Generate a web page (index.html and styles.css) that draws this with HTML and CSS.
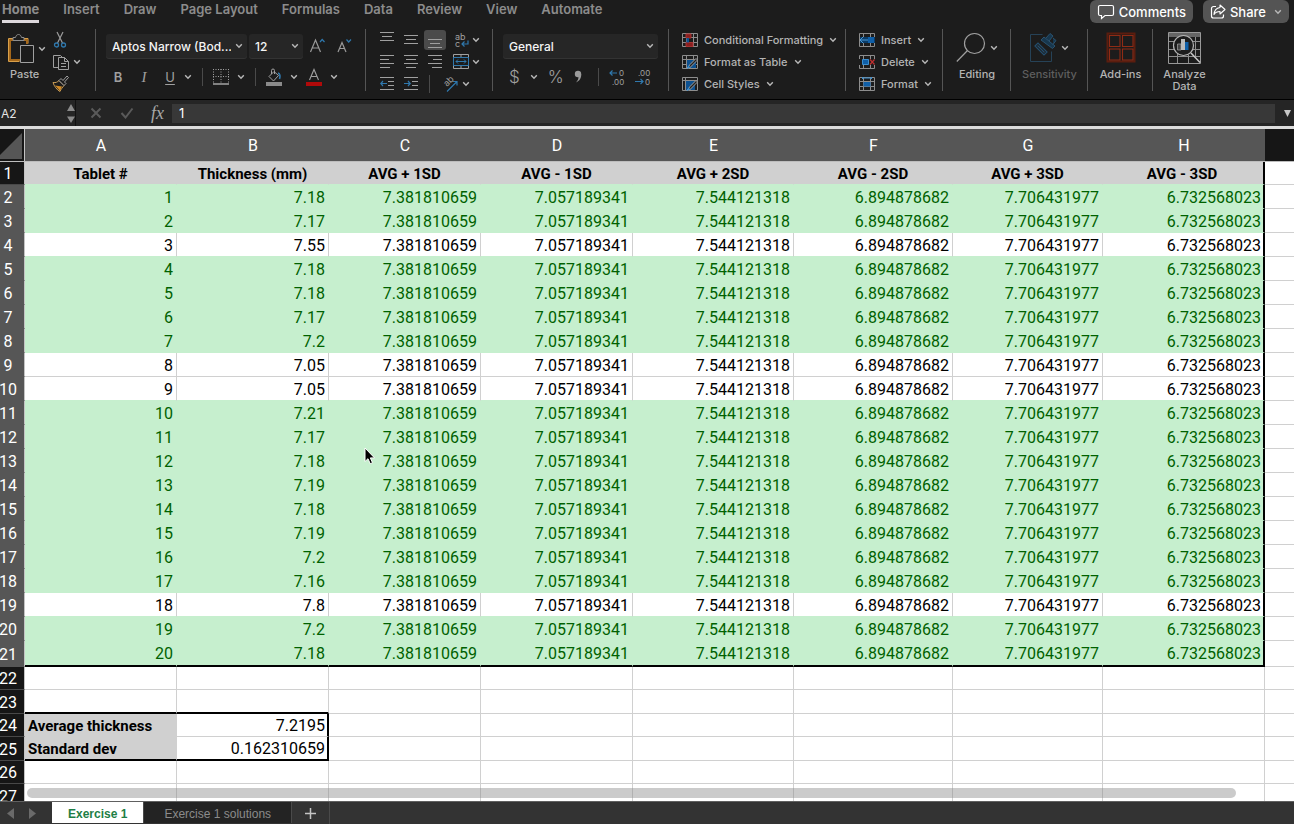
FILE: index.html
```html
<!DOCTYPE html>
<html lang="en">
<head>
<meta charset="utf-8">
<title>Exercise 1</title>
<link rel="stylesheet" href="styles.css">
</head>
<body>
<svg class="defs" aria-hidden="true">
  <symbol id="chev" viewBox="0 0 8 6"><path d="M1.2 1.2 4 4.2 6.800 1.200" fill="none" stroke="currentColor" stroke-width="1.4"/></symbol>
  <symbol id="mini-grid" viewBox="0 0 16 14"><path d="M.5.5h15v13H.5zM.5 4.500h15M.5 9.500h15M4.500.5v13M11.500.5v13" fill="none" stroke="#8d8d8d"/></symbol>
</svg>
<div class="app">
  <header class="top">
    <nav class="tabs">
      <a href="#" class="tab current">Home</a><a href="#" class="tab">Insert</a><a href="#" class="tab">Draw</a><a href="#" class="tab">Page Layout</a><a href="#" class="tab">Formulas</a><a href="#" class="tab">Data</a><a href="#" class="tab">Review</a><a href="#" class="tab">View</a><a href="#" class="tab">Automate</a>
    </nav>
    <div class="actions">
      <button class="pill"><svg width="18" height="16" viewBox="0 0 18 16"><path d="M3 1.500h12a1.500 1.500 0 0 1 1.500 1.500v7a1.500 1.500 0 0 1-1.500 1.500H8L4.500 14.500v-3H3A1.500 1.500 0 0 1 1.500 10V3A1.500 1.500 0 0 1 3 1.500z" fill="none" stroke="#fff" stroke-width="1.200"/></svg>Comments</button>
      <button class="pill share"><svg width="16" height="16" viewBox="0 0 16 16"><path d="M6 2.500H3.500a2 2 0 0 0-2 2v7.500a2 2 0 0 0 2 2h8a2 2 0 0 0 2-2v-1.500" fill="none" stroke="#fff" stroke-width="1.200"/><path d="M10 1l5 4.500-5 4.500V7.500C7.500 7.500 5.500 8 4 10.500 4.300 6.500 6.500 4 10 3.500z" fill="none" stroke="#fff" stroke-width="1.100" stroke-linejoin="round"/></svg>Share<svg class="chev wide"><use href="#chev"/></svg></button>
    </div>
  </header>

  <div class="ribbon">
    <div class="group clipboard">
      <button class="big paste">
        <span class="pic"><svg width="28" height="31" viewBox="0 0 28 31"><path d="M6.500 5.500h-5v23h11M16.500 5.500h4.500v5" fill="none" stroke="#d9a04a" stroke-width="1"/><path d="M7 7H3v20h10M16 7h4v4" fill="none" stroke="#a5681b" stroke-width="2"/><path d="M6 7.500v-3h2.500c.5-2 1.500-3 3-3s2.500 1 3 3H17v3z" fill="#1c1c1c" stroke="#8d8d8d"/><path d="M13.500 12.500h13v17h-13z" fill="#1c1c1c" stroke="#a0a0a0"/></svg><svg class="chev"><use href="#chev"/></svg></span>
        <span>Paste</span>
      </button>
      <div class="stack">
        <div class="line"><button aria-label="Cut"><svg width="16" height="18" viewBox="0 0 16 18"><path d="M5 1l5.500 11M11 1L5.500 12" stroke="#9a9a9a" fill="none" stroke-width="1.200"/><g fill="none" stroke="#2f78ad" stroke-width="1.300"><circle cx="4.500" cy="14" r="2"/><circle cx="11.500" cy="14" r="2"/></g></svg></button></div>
        <div class="line"><button aria-label="Copy"><svg width="18" height="18" viewBox="0 0 18 18"><g fill="none" stroke="#a0a0a0"><path d="M6.500 14.500h-5v-12h7l2 2"/><path d="M6.500 4.500h6l4 4v8h-10z" fill="#1c1c1c"/><path d="M12.500 4.500v4h4M9 10.500h5M9 13.500h5"/></g></svg></button><button aria-label="Copy options"><svg class="chev"><use href="#chev"/></svg></button></div>
        <div class="line"><button aria-label="Format painter"><svg width="18" height="18" viewBox="0 0 18 18"><path d="M1 7.500c3 .5 4.500-.5 6-2l5 5c-1.500 2-3 3.500-4 6C5 15 2 11 1 7.500z" fill="none" stroke="#c99c55"/><path d="M3 10.500l7 1-2 4.500z" fill="#d08a26"/><path d="M7 5.500l2-2 2 2 4-4.500 1.500 1.500-4 4.500 1.500 1.500-2 2z" fill="#1c1c1c" stroke="#a0a0a0"/></svg></button></div>
      </div>
    </div>

    <div class="group font">
      <div class="line tall">
        <label class="drop face"><select aria-label="Font"><option>Aptos Narrow (Bod...</option></select><svg class="chev"><use href="#chev"/></svg></label>
        <label class="drop size"><select aria-label="Font size"><option>12</option></select><svg class="chev"><use href="#chev"/></svg></label>
        <button class="grow" aria-label="Increase font size"><svg width="18" height="18" viewBox="0 0 18 18"><path d="M1.500 15L6.500 3 11.500 15M3.300 11h6.500" fill="none" stroke="#9a9a9a" stroke-width="1.200"/><path d="M11 5l2.200-2.500L15.500 5" fill="none" stroke="#2f78ad" stroke-width="1.200"/></svg></button>
        <button aria-label="Decrease font size"><svg width="18" height="18" viewBox="0 0 18 18"><path d="M2 15L6 5.500 10 15M3.500 11.500h5" fill="none" stroke="#9a9a9a" stroke-width="1.200"/><path d="M10.500 2.500L12.700 5 15 2.500" fill="none" stroke="#2f78ad" stroke-width="1.200"/></svg></button>
      </div>
      <div class="line marks">
        <button class="mark bold">B</button><button class="mark ital">I</button><button class="mark under">U</button>
        <button aria-label="Underline options"><svg class="chev"><use href="#chev"/></svg></button>
        <i class="rule"></i>
        <button aria-label="Borders"><svg width="16" height="16" viewBox="0 0 16 16"><path d="M.5 0v14M15.500 0v14M8 0v14M0 .5h16M0 7.500h16" fill="none" stroke="#a0a0a0" stroke-dasharray="1 1.500"/><path d="M0 15h16" stroke="#bbb" stroke-width="1.300"/></svg></button>
        <button aria-label="Border options"><svg class="chev"><use href="#chev"/></svg></button>
        <i class="rule"></i>
        <button aria-label="Fill colour"><svg width="16" height="18" viewBox="0 0 16 18"><path d="M3 8.500l5-5 4.500 4-5 5.500zM5.500 6V2.500a1.500 1.500 0 0 1 3 0V6" fill="none" stroke="#a0a0a0"/><path d="M12 5c2 .5 2.500 3 1.500 6" fill="none" stroke="#2f78ad" stroke-width="1.600"/><path d="M0 14h16v4H0z" fill="#8b8b8b"/></svg></button>
        <button aria-label="Fill options"><svg class="chev"><use href="#chev"/></svg></button>
        <button aria-label="Font colour"><svg width="16" height="18" viewBox="0 0 16 18"><path d="M3.500 12L8 1.500 12.500 12M5.200 8.500h5.600" fill="none" stroke="#a0a0a0" stroke-width="1.100"/><path d="M0 14h16v4H0z" fill="#b00a0a"/></svg></button>
        <button aria-label="Font colour options"><svg class="chev"><use href="#chev"/></svg></button>
      </div>
    </div>

    <div class="group align">
      <div class="line">
        <button aria-label="Top align"><svg width="14" height="16" viewBox="0 0 14 16"><path d="M0 .5h14M2 4.500h10M0 8.500h14" stroke="#a0a0a0"/></svg></button>
        <button aria-label="Middle align"><svg width="14" height="16" viewBox="0 0 14 16"><path d="M0 3.500h14M2 7.500h10M0 11.500h14" stroke="#a0a0a0"/></svg></button>
        <button class="on" aria-label="Bottom align"><svg width="14" height="16" viewBox="0 0 14 16"><path d="M0 7.500h14M2 11.500h10M0 15.500h14" stroke="#a0a0a0"/></svg></button>
        <button aria-label="Wrap text"><svg width="16" height="20" viewBox="0 0 16 20"><text x="2" y="10" class="glyph">ab</text><text x="2" y="17" class="glyph">c</text><path d="M15 10.500V14H9M11.500 11.500L9 14l2.500 2.500" fill="none" stroke="#2f78ad" stroke-width="1.200"/></svg></button>
        <button aria-label="Wrap options"><svg class="chev"><use href="#chev"/></svg></button>
      </div>
      <div class="line">
        <button aria-label="Left"><svg width="14" height="16" viewBox="0 0 14 16"><path d="M0 1.500h14M0 5.500h9M0 9.500h14M0 13.500h10" stroke="#a0a0a0"/></svg></button>
        <button aria-label="Centre"><svg width="14" height="16" viewBox="0 0 14 16"><path d="M0 1.500h14M2 5.500h10M0 9.500h14M2 13.500h10" stroke="#a0a0a0"/></svg></button>
        <button aria-label="Right"><svg width="14" height="16" viewBox="0 0 14 16"><path d="M0 1.500h14M5 5.500h9M0 9.500h14M4 13.500h10" stroke="#a0a0a0"/></svg></button>
        <button aria-label="Merge"><svg width="16" height="16" viewBox="0 0 16 16"><path d="M.5.5h15v14H.5zM8 .5v3M8 12v2.500" fill="none" stroke="#a0a0a0"/><path d="M.5 3.500h15v8H.5z" fill="#1c1c1c" stroke="#2f78ad"/><path d="M3 7.500h10M5 5.500l-2 2 2 2M11 5.500l2 2-2 2" fill="none" stroke="#2f78ad"/></svg></button>
        <button aria-label="Merge options"><svg class="chev"><use href="#chev"/></svg></button>
      </div>
      <div class="line">
        <button aria-label="Decrease indent"><svg width="14" height="16" viewBox="0 0 14 16"><path d="M0 1.500h14M8 5.500h6M8 9.500h6M0 13.500h14" stroke="#a0a0a0"/><path d="M.8 7.500H7M3 5L.8 7.500 3 10" fill="none" stroke="#2f78ad" stroke-width="1.200"/></svg></button>
        <button aria-label="Increase indent"><svg width="14" height="16" viewBox="0 0 14 16"><path d="M0 1.500h14M8 5.500h6M8 9.500h6M0 13.500h14" stroke="#a0a0a0"/><path d="M0 7.500h6M4 5l2.200 2.500L4 10" fill="none" stroke="#2f78ad" stroke-width="1.200"/></svg></button>
        <i class="rule"></i>
        <button aria-label="Orientation"><svg class="spill" width="18" height="18" viewBox="0 0 18 18"><text x="0" y="0" class="glyph" transform="translate(6 12) rotate(-45)">ab</text><path d="M6 16.500L16 6.500M12 6.500h4v4" fill="none" stroke="#2f78ad" stroke-width="1.200"/></svg></button>
        <button aria-label="Orientation options"><svg class="chev"><use href="#chev"/></svg></button>
      </div>
    </div>

    <div class="group number">
      <div class="line tall">
        <label class="drop fmt"><select aria-label="Number format"><option>General</option></select><svg class="chev"><use href="#chev"/></svg></label>
      </div>
      <div class="line nums">
        <button class="sym">$</button><button aria-label="Currency options"><svg class="chev"><use href="#chev"/></svg></button><button class="sym">%</button><button class="comma" aria-label="Comma style"><svg width="8" height="14" viewBox="0 0 8 14"><circle cx="4" cy="4" r="3.200" fill="#9a9a9a"/><path d="M7.200 4c.3 4-1.700 7-5.200 8.500 1.800-2 2.500-3.500 2.500-6z" fill="#9a9a9a"/></svg></button>
        <i class="rule"></i>
        <button aria-label="Increase decimal"><svg width="16" height="18" viewBox="0 0 16 18"><text x="10" y="8" class="dec">0</text><text x="3" y="17" class="dec">.00</text><path d="M1 5h7M3.500 2.500L1 5l2.500 2.500" fill="none" stroke="#2f78ad" stroke-width="1.200"/></svg></button>
        <button aria-label="Decrease decimal"><svg width="16" height="18" viewBox="0 0 16 18"><text x="3" y="8" class="dec">.00</text><text x="10" y="17" class="dec">0</text><path d="M0 13.500h8M5.500 11L8 13.500 5.500 16" fill="none" stroke="#2f78ad" stroke-width="1.200"/></svg></button>
      </div>
    </div>

    <div class="group styles">
      <button class="row"><svg width="16" height="14" viewBox="0 0 16 14"><use href="#mini-grid"/><path d="M4 1h5v4H4zM4 9.500h7v4H4z" fill="#8a1f1f" stroke="#a83232"/><path d="M4.500 5h2.500v4.500H4.500z" fill="#0d5191"/></svg>Conditional Formatting<svg class="chev"><use href="#chev"/></svg></button>
      <button class="row"><svg width="16" height="14" viewBox="0 0 16 14"><use href="#mini-grid"/><path d="M5 5h9v8H5z" fill="#0d5191"/><path d="M5 13.500l3-4 6-6 1.500 1.500-6 6-3 3z" fill="#222" stroke="#a0a0a0"/><path d="M4.500 14l2-3.500 2 2z" fill="#3b8fd0"/></svg>Format as Table<svg class="chev"><use href="#chev"/></svg></button>
      <button class="row"><svg width="16" height="14" viewBox="0 0 16 14"><path d="M.5.5h15v13H.5zM.5 3.500h15M3.500.5v13" fill="none" stroke="#8d8d8d"/><path d="M4 4h9v9H4z" fill="#0d5191"/><path d="M5 13.500l3-4 6-6 1.500 1.500-6 6-3 3z" fill="#222" stroke="#a0a0a0"/><path d="M4.500 14l2-3.500 2 2z" fill="#3b8fd0"/></svg>Cell Styles<svg class="chev"><use href="#chev"/></svg></button>
    </div>

    <div class="group cells">
      <button class="row"><svg width="16" height="14" viewBox="0 0 16 14"><use href="#mini-grid"/><path d="M1 4h15v6H1z" fill="#0a3c68"/><path d="M9 4h6v6H9z" fill="#0f5fa8"/><path d="M1 7h8M4 4L1 7l3 3" fill="none" stroke="#4c9ad8"/></svg>Insert<svg class="chev"><use href="#chev"/></svg></button>
      <button class="row"><svg width="16" height="14" viewBox="0 0 16 14"><use href="#mini-grid"/><path d="M0 4h16v6H0z" fill="#1c1c1c"/><path d="M3.500 4.500h6v5h-6z" fill="#0f5fa8" stroke="#3b8fd0"/><path d="M11 4.500l4.500 5M15.500 4.500l-4.500 5" stroke="#c03030" stroke-width="1.200"/></svg>Delete<svg class="chev"><use href="#chev"/></svg></button>
      <button class="row"><svg width="16" height="14" viewBox="0 0 16 14"><use href="#mini-grid"/><path d="M4.500 5h7v4.500h-7z" fill="#0f5fa8"/><path d="M3.500 0v2M12.500 0v2M3.500 1h9" stroke="#3b8fd0"/></svg>Format<svg class="chev"><use href="#chev"/></svg></button>
    </div>

    <div class="group solo editing">
      <button class="big"><span class="pic"><svg width="30" height="31" viewBox="0 0 30 31"><circle cx="18.500" cy="11.500" r="10" fill="none" stroke="#a0a0a0" stroke-width="1.200"/><path d="M11.500 18.500L.8 29.500" stroke="#a0a0a0" stroke-width="1.200"/></svg><svg class="chev"><use href="#chev"/></svg></span><span>Editing</span></button>
    </div>
    <div class="group solo sens">
      <button class="big dim"><span class="pic"><svg width="28" height="31" viewBox="0 0 28 31"><path d="M13.500 2.500H1.500v27h21v-10" fill="none" stroke="#264257"/><path d="M6 14l3-3 9 9-3 3zM8.500 13.500l7 7" fill="none" stroke="#244e6e" stroke-width="1.200"/><path d="M12 8l3-3 11 9-2.500 2.500zM17 6l4-4.500 3 2.500-4 5M24 6l3 2.500-3 4" fill="#17374e" stroke="#2a526f"/></svg><svg class="chev"><use href="#chev"/></svg></span><span>Sensitivity</span></button>
    </div>
    <div class="group solo addins">
      <button class="big"><span class="pic"><svg width="30" height="31" viewBox="0 0 30 31"><path d="M1.500 1.500h27v28h-27z" fill="none" stroke="#5c1d0e" stroke-width="2"/><path d="M3.500 3.500h10.500v11H3.500zM16.500 3.500H27v11H16.500zM3.500 17H14v11H3.500zM16.500 17H27v11H16.500z" fill="none" stroke="#8f2b15" stroke-width="1.100"/></svg></span><span>Add-ins</span></button>
    </div>
    <div class="group solo analyze">
      <button class="big"><span class="pic"><svg width="33" height="32" viewBox="0 0 33 32"><path d="M.5.5h32v31H.5z" fill="none" stroke="#999"/><path d="M1 1h31v4H1z" fill="#666"/><path d="M1 9.500h8M23 9.500h9M1 17.500h6M25 17.500h7M1 24.500h31M9.500 22v9M20.500 23v8M27.500 5v20" stroke="#8d8d8d"/><circle cx="15.500" cy="13.500" r="10" fill="#1c1c1c" stroke="#b5b5b5" stroke-width="1.200"/><path d="M23 21l9 9.500" stroke="#c8c8c8" stroke-width="1.500"/><path d="M9.500 12h3.500v6H9.500z" fill="#444" stroke="#999" stroke-width=".8"/><path d="M13 7h4v11h-4z" fill="#bbb"/><path d="M17 10h3.500v8H17z" fill="#0f5fa8"/></svg></span><span>Analyze<br>Data</span></button>
    </div>
  </div>

  <div class="formula">
    <input class="name" aria-label="Name box" value="A2">
    <span class="spin"><svg width="8" height="19" viewBox="0 0 8 19"><path d="M4 0l4 7H0zM4 19l4-6.500H0z" fill="#8a8a8a"/></svg></span>
    <div class="fxs">
      <button aria-label="Cancel"><svg width="12" height="12" viewBox="0 0 12 12"><path d="M1.500 1.500l9 9M10.500 1.500l-9 9" stroke="#5a5a5a" stroke-width="2"/></svg></button>
      <button aria-label="Enter"><svg width="14" height="12" viewBox="0 0 14 12"><path d="M1.500 6l4 4.500 7-9" fill="none" stroke="#5a5a5a" stroke-width="2"/></svg></button>
      <button class="fx">fx</button>
    </div>
    <input class="entry" aria-label="Formula" value="1">
    <button class="expand" aria-label="Expand formula bar"><svg width="7" height="7" viewBox="0 0 7 7"><path d="M0 0h7L3.500 7z" fill="#c8c8c8"/></svg></button>
  </div>

  <main class="sheet">
    <table>
      <colgroup><col class="c-num"><col class="c-std"><col class="c-std"><col class="c-std"><col class="c-std"><col class="c-e"><col class="c-f"><col class="c-g"><col class="c-h"><col></colgroup>
      <thead><tr><th class="corner"><svg width="22" height="26" viewBox="0 0 22 26"><path d="M22 0v26H0V22z" fill="#565656"/></svg></th><th>A</th><th>B</th><th>C</th><th>D</th><th>E</th><th>F</th><th>G</th><th>H</th><th class="off"></th></tr></thead>
      <tbody id="rows"></tbody>
    </table>
    <div class="scroll"></div>
    <svg class="pointer" width="12" height="18" viewBox="0 0 12 18"><path d="M1 1v13.500l3-2.800 2.200 5 2.300-1-2.200-4.800h4.200z" fill="#000" stroke="#fff"/></svg>
  </main>

  <footer class="sheets">
    <button class="arrow" aria-label="Previous sheet"><svg width="7" height="11" viewBox="0 0 7 11"><path d="M7 0v11L0 5.500z" fill="#6a6a6a"/></svg></button>
    <button class="arrow" aria-label="Next sheet"><svg width="7" height="11" viewBox="0 0 7 11"><path d="M0 0v11l7-5.500z" fill="#6a6a6a"/></svg></button>
    <button class="leaf active">Exercise 1</button>
    <button class="leaf">Exercise 1 solutions</button>
    <button class="plus" aria-label="Add sheet"><svg width="11" height="11" viewBox="0 0 11 11"><path d="M5.500 0v11M0 5.500h11" stroke="#c4c4c4" stroke-width="1.500"/></svg></button>
  </footer>
</div>
<script src="script.js"></script>
</body>
</html>
```
FILE: styles.css
```css
* { box-sizing: border-box; }
body { margin: 0; background: #1c1c1c; font-family: Inter, "Liberation Sans", sans-serif; }
button, input, select { font: inherit; color: inherit; background: none; border: 0; padding: 0; margin: 0; border-radius: 0; outline: 0; }
button { display: inline-flex; align-items: center; justify-content: center; flex: none; }
svg { display: block; flex: none; }
.spill { overflow: visible; }
.defs { position: absolute; width: 0; height: 0; }
.app { display: flex; flex-direction: column; height: 100vh; overflow: hidden; }
.chev { width: 8px; height: 6px; color: #b8b8b8; }

.top { display: flex; justify-content: space-between; height: 29px; padding: 0 5px 0 2px; }
.tabs { display: flex; gap: 24px; }
.tab { height: 23px; line-height: 19px; font-size: 13px; font-weight: 600; color: #8c8c8c; text-decoration: none; }
.tab.current { font-weight: 700; border-bottom: 3px solid #ddd8dc; }
.actions { display: flex; gap: 10px; }
.pill { height: 23px; padding: 0 7px; gap: 4px; border-radius: 6px; background: #545454; color: #fff; font-size: 13px; font-weight: 500; }
.pill .wide { margin-left: 4px; }

.ribbon { display: flex; height: 71px; border-bottom: 1px solid #000; color: #b4b4b4; font-size: 11px; font-weight: 500; }
.group { position: relative; flex: none; display: flex; flex-direction: column; }
.group::after { content: ""; position: absolute; right: 0; top: 0; width: 1px; height: 62px; background: #555; }
.group.analyze::after { display: none; }
.line { display: flex; align-items: center; height: 22px; }
.big { flex-direction: column; justify-content: flex-start; line-height: 12px; }
.pic { display: flex; align-items: center; gap: 4px; height: 35px; margin-bottom: 3px; }

.clipboard { width: 96px; flex-direction: row; gap: 6px; padding-left: 7px; }
.paste { align-items: flex-start; padding-top: 2px; }
.paste .pic { margin-bottom: 2px; gap: 3px; }
.paste > span:last-child { padding-left: 3px; }
.stack .line { gap: 3px; }

.font { width: 270px; padding: 4px 0 0 10px; }
.tall { height: 26px; gap: 2px; }
.drop { position: relative; display: flex; height: 24px; border-radius: 3px; background: #262626; box-shadow: 0 1px 0 #333; color: #f4f4f4; font-size: 12px; }
.drop select { appearance: none; width: 100%; padding: 0 16px 0 6px; }
.drop .chev { position: absolute; right: 4px; top: 9px; pointer-events: none; }
.face { width: 141px; }
.size { width: 54px; }
.grow { margin: 0 7px 0 4px; }
.marks { height: 38px; gap: 8px; padding: 0 0 2px 6px; }
.mark { width: 12px; margin-right: 6px; font-size: 13px; font-weight: 400; color: #a0a0a0; }
.bold { font-weight: 600; }
.ital { font-family: "Liberation Serif", serif; font-size: 15px; font-style: italic; }
.under { margin-right: 0; text-decoration: underline; text-underline-offset: 2px; }
.rule { flex: none; width: 1px; height: 18px; background: #4a4a4a; }
.marks .rule { margin: 0 2px; }

.align { width: 127px; padding: 0 0 0 14px; }
.align .line { gap: 10px; }
.align .on { width: 22px; height: 20px; margin: 0 -4px; border-radius: 3px; background: #4b4b4b; }
.align .line button:nth-child(4) { margin-left: 1px; }
.align .line button:last-child { margin-left: -7px; }
.align .line .rule { margin: 0 0 0 1px; }
.glyph { font: 400 9px Inter, sans-serif; fill: #a0a0a0; }
.dec { font: 400 8px Inter, sans-serif; fill: #a0a0a0; }

.number { width: 176px; padding: 4px 0 0 10px; }
.fmt { width: 155px; }
.nums { height: 38px; gap: 10px; padding: 0 0 2px 6px; }
.sym { min-width: 10px; font-size: 17px; font-weight: 300; color: #a0a0a0; }
.nums .rule { margin: 0 0 0 6px; }

.row { height: 22px; gap: 6px; justify-content: flex-start; }
.styles { width: 177px; padding-left: 13px; }
.cells { width: 97px; padding-left: 13px; }
.solo { padding-top: 1px; align-items: center; }
.editing { width: 68px; }
.sens { width: 77px; }
.addins { width: 65px; }
.analyze { width: 63px; }
.dim { color: #5f5f5f; }

.formula { display: flex; align-items: center; height: 29px; flex: none; background: #252525; border-bottom: 3px solid #dcdcdc; color: #e4e4e4; }
.name { width: 67px; padding-left: 1px; font-size: 12px; }
.spin { display: flex; align-items: center; width: 9px; height: 100%; border-right: 1px solid #111; }
.fxs { display: flex; align-items: center; justify-content: space-between; width: 96px; padding: 0 8px 0 14px; }
.fx { font: italic 18px "Liberation Serif", serif; color: #a8a8a8; }
.entry { flex: 1; height: 19px; padding-left: 7px; background: #383838; font-size: 13px; color: #fff; }
.expand { width: 19px; padding-left: 5px; }

.sheet { position: relative; flex: 1; min-height: 0; overflow: hidden; background: #fff; }
table { width: 100%; table-layout: fixed; border-collapse: separate; border-spacing: 0; font: 400 16px Roboto, sans-serif; color: #000; }
.c-num { width: 25px; }
.c-std { width: 152px; }
.c-e { width: 161px; }
.c-f { width: 159px; }
.c-g { width: 150px; }
.c-h { width: 162px; }
th, td { padding: 2px 0 0; font-weight: 400; line-height: 20px; white-space: nowrap; }
thead th { height: 33px; background: #565656; color: #fff; border-bottom: 1px solid #bdbdbd; }
thead .corner { padding: 0; background: #161616; border-right: 1px solid #c4c4c4; vertical-align: bottom; }
.corner svg { margin: 0 0 2px; }
thead .off { background: #161616; }
td { height: 24px; padding-right: 3px; text-align: right; border-right: 1px solid #d0d0d0; border-bottom: 1px solid #d0d0d0; }
.off { border-right: 0; }
.num { padding-right: 8px; text-align: center; background: #161616; color: #fff; border-right: 1px solid #c4c4c4; border-bottom: 1px solid #484848; }
.num span { display: flex; justify-content: center; }
.sel .num { background: #565656; border-bottom-color: #565656; }
.short td { height: 23px; }
.titles td { padding-right: 0; text-align: center; font-size: 15px; font-weight: 700; background: #d0d0d0; border-color: #d0d0d0; }
.green td { color: #006100; background: #c6efce; border-color: #c6efce; }
.above td { border-bottom-color: #c6efce; }
tr td.edge { border-right: 2px solid #000; padding-right: 2px; }
tr td.off { background: #fff; border-right: 0; border-bottom-color: #d0d0d0; }
.last td { height: 26px; border-bottom: 2px solid #000; }
.last td.off { border-bottom: 1px solid #d0d0d0; }
td.under-line { border-bottom: 2px solid #000; }
td.box { border-right: 2px solid #000; padding-right: 2px; }
td.label { padding-left: 3px; text-align: left; font-size: 15px; font-weight: 700; background: #d0d0d0; border-right-color: #d0d0d0; }
td.joined { border-bottom-color: #d0d0d0; }
.scroll { position: absolute; left: 27px; right: 58px; bottom: 3px; height: 10px; border-radius: 5px; background: rgba(140, 140, 140, .45); }
.pointer { position: absolute; left: 364px; top: 318px; }

.sheets { flex: none; display: flex; height: 23px; background: #333; border-top: 1px solid #606060; font: 400 12px "Liberation Sans", sans-serif; color: #8b8b8b; }
.arrow { width: 20px; }
.arrow + .arrow { width: 24px; margin-right: 8px; }
.leaf { height: 21px; padding: 2px 20px 0; background: #232323; border-right: 1px solid #4a4a4a; font-size: 13px; }
.leaf { font-size: 12px; }
.leaf.active { padding: 2px 16px 0; background: #fff; color: #1e7e45; font-weight: 700; }
.plus { width: 38px; border-right: 1px solid #4a4a4a; }
```
FILE: script.js
```js
const thickness = ["7.18", "7.17", "7.55", "7.18", "7.18", "7.17", "7.2", "7.05", "7.05", "7.21",
  "7.17", "7.18", "7.19", "7.18", "7.19", "7.2", "7.16", "7.8", "7.2", "7.18"];
const limits = ["7.381810659", "7.057189341", "7.544121318", "6.894878682", "7.706431977", "6.732568023"];
const titles = ["Tablet #", "Thickness (mm)", "AVG + 1SD", "AVG - 1SD", "AVG + 2SD", "AVG - 2SD", "AVG + 3SD", "AVG - 3SD"];
const isGreen = i => i < 20 && Number(thickness[i]) > 7.057189341 && Number(thickness[i]) < 7.381810659;
const body = document.getElementById("rows");

function addRow(number, rowClass, values, cellClasses = []) {
  const tr = body.insertRow();
  tr.className = rowClass;
  const head = document.createElement("th");
  const label = document.createElement("span");
  head.scope = "row";
  head.className = "num";
  label.textContent = number;
  head.append(label);
  tr.append(head);
  for (let c = 0; c < 9; c++) {
    const td = tr.insertCell();
    td.textContent = values[c] || "";
    td.className = c === 8 ? "off" : cellClasses[c] || "";
  }
}

const edge = { 7: "edge" };
addRow(1, "short titles above", titles, edge);
thickness.forEach((t, i) => {
  const cls = ["sel", isGreen(i) ? "green" : "", isGreen(i + 1) ? "above" : "", i === 19 ? "last" : ""].join(" ");
  addRow(i + 2, cls, [String(i + 1), t, ...limits], edge);
});
addRow(22, "short", []);
addRow(23, "", [], ["under-line", "under-line"]);
addRow(24, "short", ["Average thickness", "7.2195"], ["label joined", "box"]);
addRow(25, "", ["Standard dev", "0.162310659"], ["label under-line", "box under-line"]);
addRow(26, "short", []);
addRow(27, "", []);
```
